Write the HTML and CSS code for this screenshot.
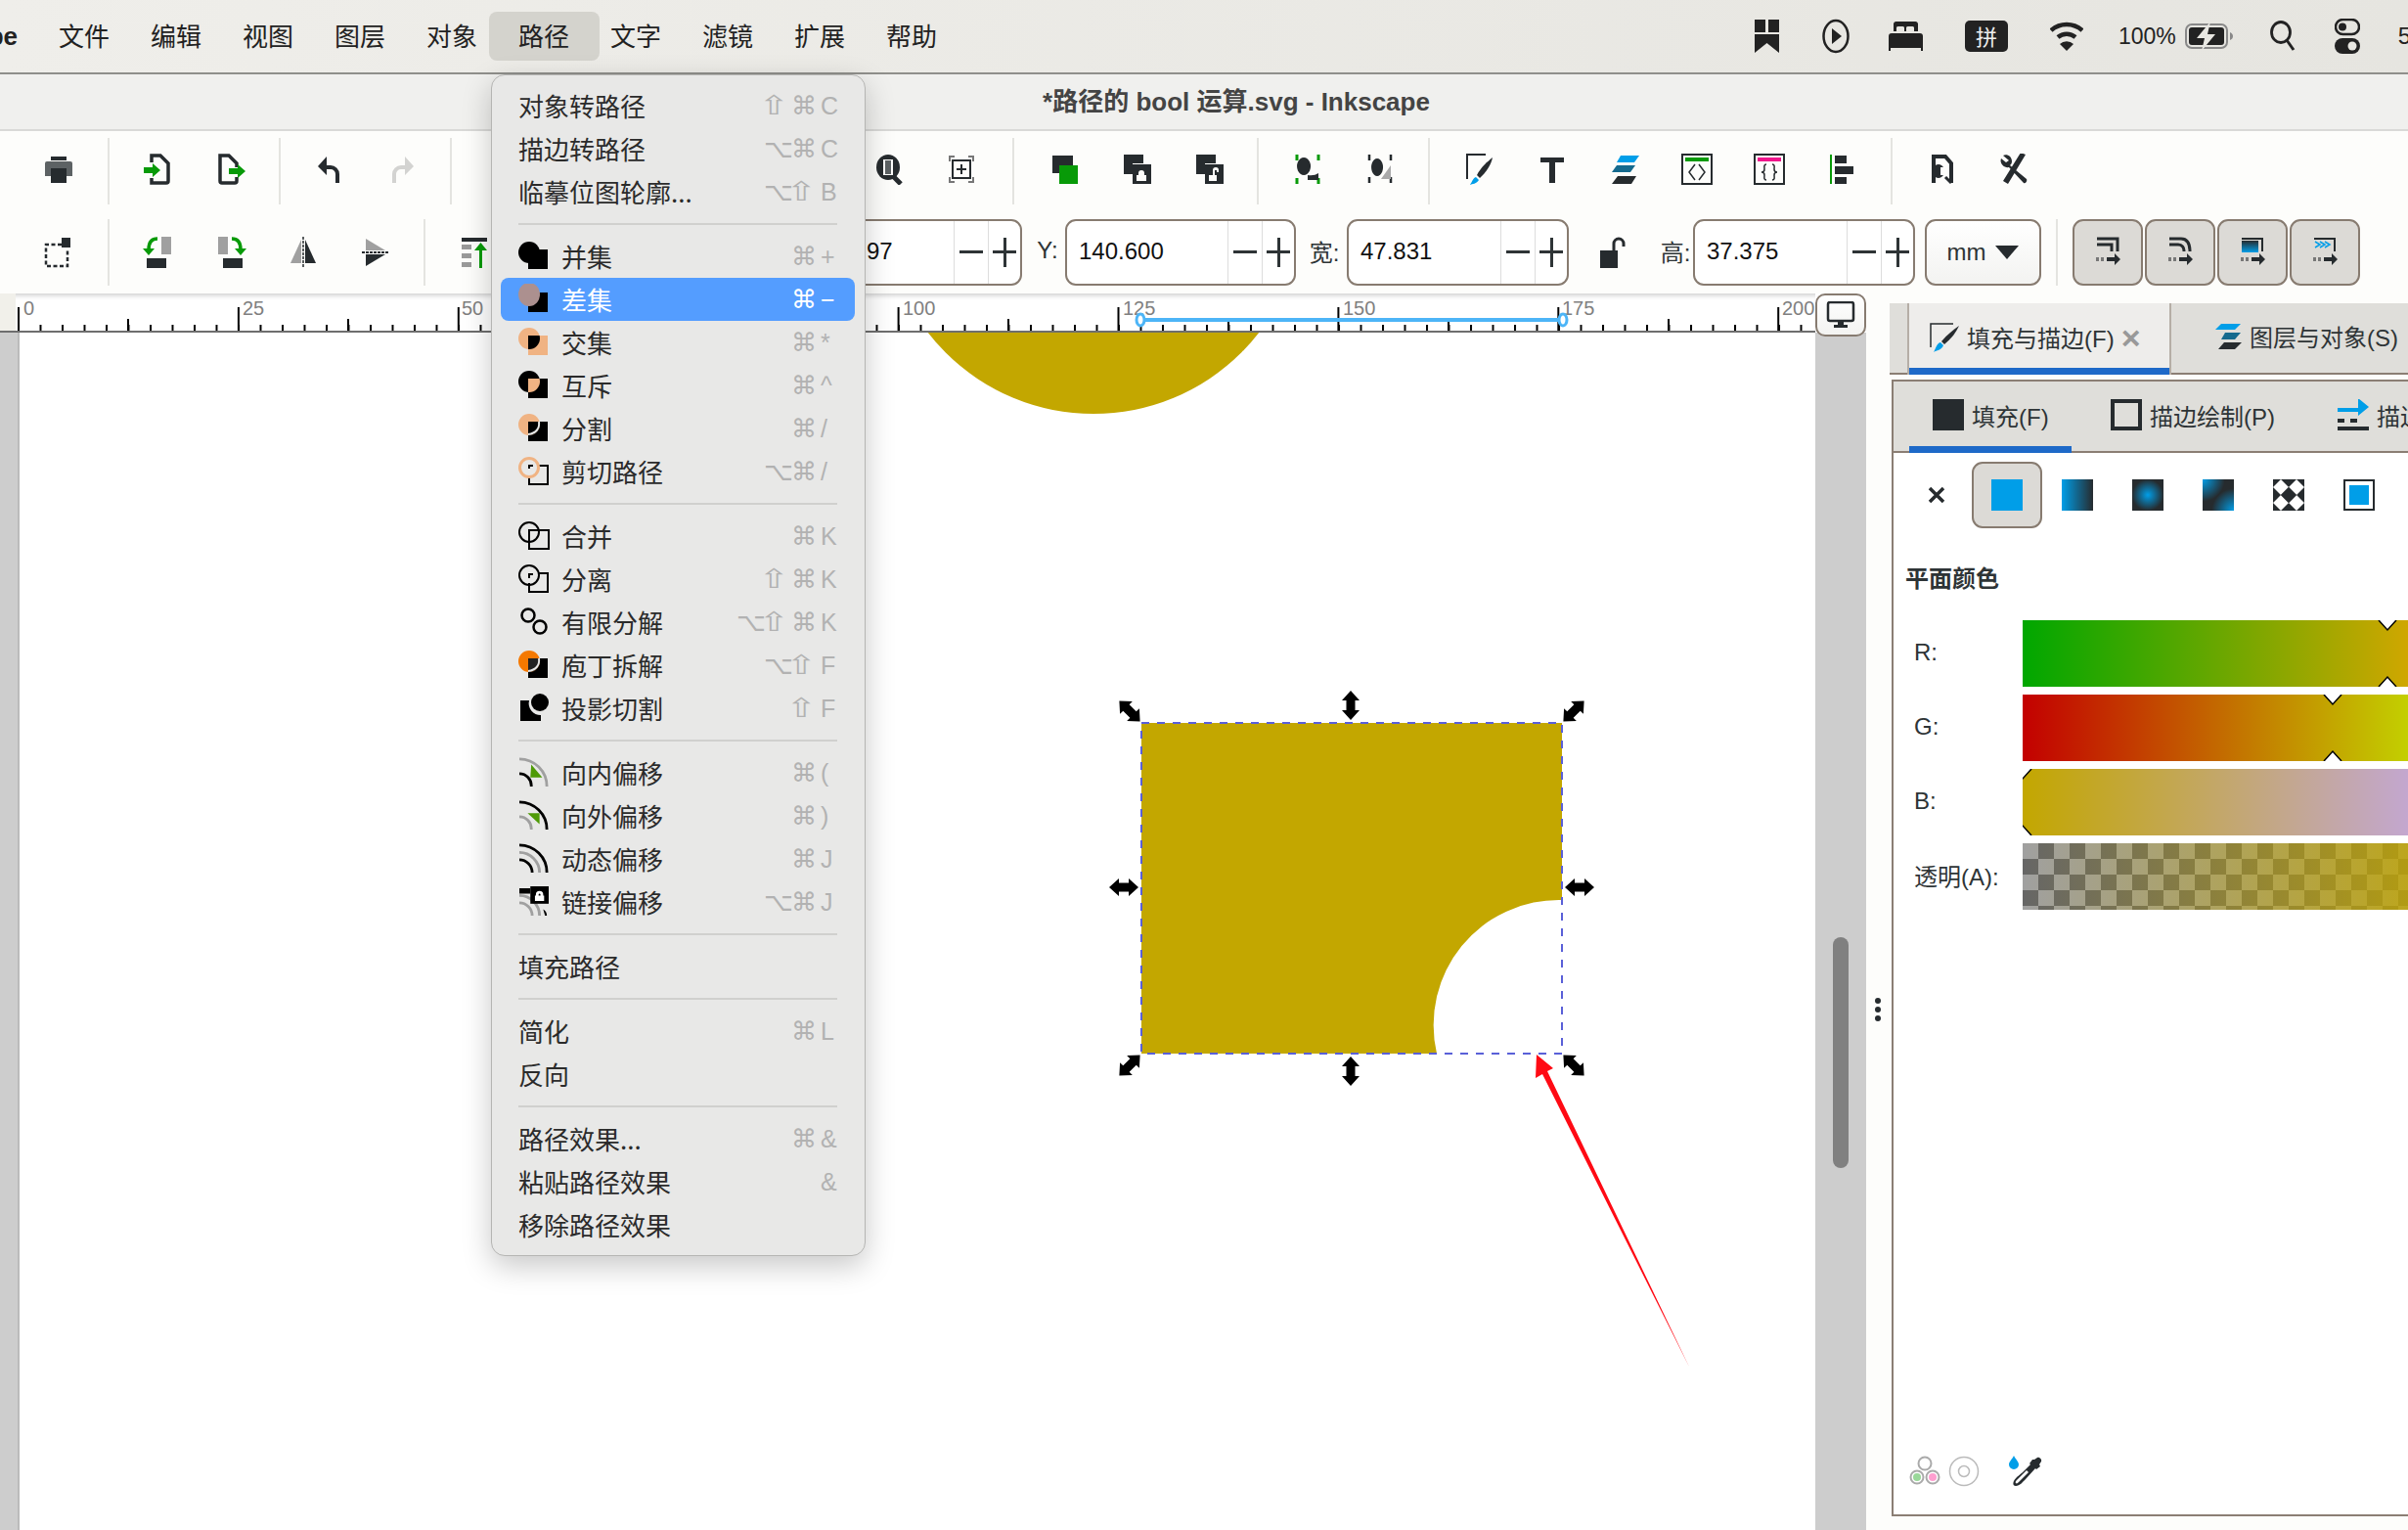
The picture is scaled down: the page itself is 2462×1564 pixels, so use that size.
FILE: index.html
```html
<!DOCTYPE html>
<html lang="zh-CN">
<head>
  <meta charset="UTF-8">
  <title>路径的 bool 运算.svg - Inkscape</title>
  <link rel="stylesheet" href="styles.css">
</head>
<body>
  <!-- shared clip shapes for the boolean icons -->
  <svg class="defs" width="0" height="0">
    <defs>
      <clipPath id="clip-square"><rect x="10" y="9" width="20" height="20"/></clipPath>
      <g id="handle"><path d="M0-15 9-5H4.5V5H9L0 15-9 5H-4.5V-5H-9Z"/></g>
      <pattern id="tick-minor" x="18" y="0" width="22.5" height="40" patternUnits="userSpaceOnUse"><rect y="32" width="2" height="6"/></pattern>
      <pattern id="tick-mid" x="130" y="0" width="225" height="40" patternUnits="userSpaceOnUse"><rect y="26" width="2" height="12"/></pattern>
      <pattern id="tick-major" x="18" y="0" width="224.9" height="40" patternUnits="userSpaceOnUse"><rect y="14" width="2" height="24"/></pattern>
    </defs>
  </svg>

  <!-- macOS menu bar -->
  <header class="menubar">
    <div class="app-name"><span>Inkscape</span></div>
    <nav class="menus">
      <a>文件</a><a>编辑</a><a>视图</a><a>图层</a><a>对象</a><a class="active">路径</a><a>文字</a><a>滤镜</a><a>扩展</a><a>帮助</a>
    </nav>
    <div class="status">
      <svg class="st-book" width="25" height="34" viewBox="0 0 25 34"><path d="M0 0h11v13H0zM14 0h11v13H14zM0 15h25v19L12.500 24 0 34z"/></svg>
      <svg class="st-play" width="28" height="36" viewBox="0 0 28 36"><ellipse cx="14" cy="18" rx="12.500" ry="16" fill="none" stroke="#222" stroke-width="2.500"/><path d="M10 10l10 8-10 8z"/></svg>
      <svg class="st-bed" width="35" height="30" viewBox="0 0 35 30"><path d="M5 2a3 3 0 0 1 3-2h19a3 3 0 0 1 3 2v8h-4V6a2 2 0 0 0-2-1h-4a2 2 0 0 0-2 1v4h-2V6a2 2 0 0 0-2-1H10a2 2 0 0 0-2 1v4H5zM3 12h29a3 3 0 0 1 3 3v15h-2v-3H2v3H0V15a3 3 0 0 1 3-3z"/></svg>
      <span class="st-pinyin">拼</span>
      <svg class="st-wifi" width="34" height="32" viewBox="0 0 34 32"><path d="M1 10a24 24 0 0 1 32 0" fill="none" stroke="#222" stroke-width="4.500"/><path d="M8 17a14 14 0 0 1 18 0" fill="none" stroke="#222" stroke-width="4.500"/><path d="M17 31l-7-7a10 10 0 0 1 14 0z"/></svg>
      <span class="st-batt-text">100%</span>
      <svg class="st-batt" width="50" height="32" viewBox="0 0 50 32"><rect x="1" y="4" width="42" height="24" rx="6" fill="none" stroke="#888" stroke-width="2"/><rect x="4" y="7" width="36" height="18" rx="3"/><path d="M46 12c2 1 3 2 3 4s-1 3-3 4z" fill="#888"/><path d="M26 1 12 18h8l-3 13 14-17h-8z" fill="#e8e7e2"/></svg>
      <svg class="st-search" width="26" height="32" viewBox="0 0 26 32"><ellipse cx="11" cy="12" rx="9.500" ry="10.500" fill="none" stroke="#222" stroke-width="2.800"/><path d="M17 20l7 10" stroke="#222" stroke-width="3"/></svg>
      <svg class="st-ctrl" width="26" height="36" viewBox="0 0 26 36"><rect x="1" y="1" width="24" height="15" rx="7.500" fill="none" stroke="#222" stroke-width="2.500"/><circle cx="8" cy="8.500" r="4"/><rect y="20" width="26" height="16" rx="8"/><circle cx="18" cy="28" r="4.500" fill="#e8e7e2"/></svg>
      <span class="st-clock">5</span>
    </div>
  </header>

  <div class="titlebar">*路径的 bool 运算.svg - Inkscape</div>

  <!-- Toolbars -->
  <section class="toolbars">
    <div class="toolrow row-one">
      <div class="group g-first">
        <div class="tool"><svg viewBox="0 0 32 32"><path class="dk" d="M8 3h16v4H8z"/><path fill="#5d6264" d="M2 10a2 2 0 0 1 2-2h24a2 2 0 0 1 2 2v13H2z"/><path class="dk" d="M8 15h16v15H8z"/></svg></div>
      </div>
      <div class="group g-file">
        <div class="tool"><svg viewBox="0 0 32 32"><path class="ln" d="M9 9V2h9l8 8v18a2 2 0 0 1-2 2H9v-5"/><path fill="#089a08" d="M1 14h9v-4l8 7-8 7v-4H1z"/></svg></div>
        <div class="tool"><svg viewBox="0 0 32 32"><path class="ln" d="M22 14v-4l-8-8H5v26a2 2 0 0 0 2 2h13a2 2 0 0 0 2-2v-4"/><path fill="#089a08" d="M14 15h9v-4l8 7-8 7v-4h-9z"/></svg></div>
      </div>
      <div class="group g-file">
        <div class="tool"><svg viewBox="0 0 32 32"><path class="dk" d="M13 3 4 13l9 9v-6h4a5 5 0 0 1 5 5v9h4v-9a9 9 0 0 0-9-9h-4z"/></svg></div>
        <div class="tool"><svg viewBox="0 0 32 32"><path fill="#d3d3d1" d="M19 3l9 10-9 9v-6h-4a5 5 0 0 0-5 5v9H6v-9a9 9 0 0 1 9-9h4z"/></svg></div>
      </div>
      <div class="group g-zoom">
        <div class="tool tool-hidden"><svg viewBox="0 0 32 32"><path class="dk" d="M0 0h6v22H0z"/></svg></div>
        <div class="tool"><svg viewBox="0 0 32 32"><ellipse cx="15" cy="14" rx="12" ry="13" class="dk"/><rect x="10" y="6" width="10" height="16" fill="#fdfdfb"/><rect x="12" y="7" width="6" height="14" fill="#5d6264"/><path d="M21 24l7 7" stroke="#262b2e" stroke-width="5"/></svg></div>
        <div class="tool"><svg viewBox="0 0 32 32"><path fill="none" stroke="#777" stroke-width="2" d="M4 8V3h5M23 3h5v5M28 24v5h-5M9 29H4v-5"/><rect x="7" y="7" width="18" height="18" fill="none" stroke="#262b2e" stroke-width="2"/><path d="M16 11v10M11 16h10" stroke="#262b2e" stroke-width="2"/></svg></div>
      </div>
      <div class="group g-order">
        <div class="tool"><svg viewBox="0 0 32 32"><path class="dk" d="M5 2h21v18H5z"/><path fill="#089a08" d="M15 12h19v19H15z" transform="translate(-3)"/></svg></div>
        <div class="tool"><svg viewBox="0 0 32 32"><path class="dk" d="M4 1h20v20H4z"/><path fill="#fdfdfb" d="M13 10h19v22H13z"/><path class="dk" d="M13 11h19v20H13z"/><path fill="#fdfdfb" d="M19 20a3 3 0 0 1 6 0v2h2v6H17v-6h2z"/></svg></div>
        <div class="tool"><svg viewBox="0 0 32 32"><path class="dk" d="M4 1h20v20H4z"/><path fill="#fdfdfb" d="M13 10h19v22H13z"/><path class="dk" d="M13 11h19v20H13z"/><path fill="#fdfdfb" d="M21 17a3 3 0 0 1 6 0v2h-2v-2h-2v5h2v6H17v-6h4z"/></svg></div>
      </div>
      <div class="group g-snap">
        <div class="tool"><svg viewBox="0 0 32 32"><path fill="none" stroke="#089a08" stroke-width="3" d="M5 1v6M27 1v6M5 25v6M27 25v6"/><path d="M12 4a7 9 0 1 0 .1 0z" class="dk"/><path class="dk" d="M16 22a10 5 0 0 0 11-2v7H16z"/></svg></div>
        <div class="tool"><svg viewBox="0 0 32 32"><path fill="none" stroke="#262b2e" stroke-width="2.500" stroke-dasharray="6 3" d="M5 1v9M27 1v9M5 24v7M27 24v7"/><path class="dk" d="M13 5a6 9 0 1 0 .1 0z"/><path fill="#a9a9a9" d="M27 12v14H17z"/></svg></div>
      </div>
      <div class="group g-docs">
        <div class="tool"><svg viewBox="0 0 32 32"><path fill="none" stroke="#262b2e" stroke-width="2" d="M22 1H3v25"/><path class="dk" d="M29 4c-1 6-6 15-13 21l-3-3C17 14 24 8 29 4z"/><path fill="#009ee8" d="M12 24l3 3c-2 4-7 4-9 5 2-3 3-7 6-8z"/></svg></div>
        <div class="tool"><svg viewBox="0 0 32 32"><path class="dk" d="M4 4h24v5H19v21h-6V9H4z"/></svg></div>
        <div class="tool"><svg viewBox="0 0 32 32"><path fill="#009ee8" d="M12 2h19l-5 7H8z"/><path fill="#156a8e" d="M8 12h19l-5 7H3z"/><path class="dk" d="M9 23h19l-5 8H3z"/></svg></div>
        <div class="tool"><svg viewBox="0 0 32 32"><rect x="1" y="1" width="30" height="30" fill="none" stroke="#262b2e" stroke-width="2"/><rect x="4" y="4" width="24" height="4" fill="#089a08"/><path d="M14 11l-6 8 6 8M18 11l6 8-6 8" fill="none" stroke="#262b2e" stroke-width="1.500"/></svg></div>
        <div class="tool"><svg viewBox="0 0 32 32"><rect x="1" y="1" width="30" height="30" fill="none" stroke="#262b2e" stroke-width="2"/><rect x="4" y="4" width="24" height="4" fill="#f0158c"/><path d="M13 11c-3 0-2 3-2 5s-1 3-3 3c2 0 3 1 3 3s-1 5 2 5M19 11c3 0 2 3 2 5s1 3 3 3c-2 0-3 1-3 3s1 5-2 5" fill="none" stroke="#262b2e" stroke-width="1.500"/></svg></div>
        <div class="tool"><svg viewBox="0 0 32 32"><path fill="#089a08" d="M4 1h2v30H4z"/><path class="dk" d="M9 2h12v8H9zM9 13h19v8H9zM9 24h12v7H9z"/></svg></div>
      </div>
      <div class="group g-prefs">
        <div class="tool"><svg viewBox="0 0 32 32"><path fill="none" stroke="#262b2e" stroke-width="4" d="M8 30V3h12l6 7v20"/><path class="dk" d="M13 11a6 7 0 1 1-.1 0z"/><rect x="15" y="14" width="5" height="8" fill="#fdfdfb"/><path d="M20 24l6 6" stroke="#262b2e" stroke-width="3"/></svg></div>
        <div class="tool"><svg viewBox="0 0 32 32"><path class="dk" d="M28 1 10 31l-5-3L23-1zM5 2c4-2 9 1 9 6 0 2-1 3-2 4l17 14c1 2-1 5-3 4L11 14c-5 1-10-4-8-9l5 4 3-2z"/></svg></div>
      </div>
    </div>

    <div class="toolrow row-two">
      <div class="group g-first">
        <div class="tool"><svg viewBox="0 0 32 32"><path fill="none" stroke="#262b2e" stroke-width="2.500" stroke-dasharray="4 2.500" d="M19 8H3v22h22V14"/><path class="dk" d="M19 1h9v10h-9z"/></svg></div>
      </div>
      <div class="group g-transform">
        <div class="tool"><svg viewBox="0 0 32 32"><path fill="#a0a0a0" d="M19 0h10v18H19z"/><path class="dk" d="M4 22h20v10H4z"/><path fill="none" stroke="#089a08" stroke-width="3.500" d="M15 2c-6 0-9 4-9 11"/><path fill="#089a08" d="M0 12h12l-6 7z"/></svg></div>
        <div class="tool"><svg viewBox="0 0 32 32"><path fill="#a0a0a0" d="M3 0h10v18H3z"/><path class="dk" d="M8 22h20v10H8z"/><path fill="none" stroke="#089a08" stroke-width="3.500" d="M17 2c6 0 9 4 9 11"/><path fill="#089a08" d="M20 12h12l-6 7z"/></svg></div>
        <div class="tool"><svg viewBox="0 0 32 32"><path fill="#a0a0a0" d="M14 3v24H3z"/><path class="dk" d="M18 3v24h11z"/><path d="M16 0v32" stroke="#262b2e" stroke-width="1.500" stroke-dasharray="3 1"/></svg></div>
        <div class="tool"><svg viewBox="0 0 32 32"><path fill="#a0a0a0" d="M6 2v12h20z"/><path class="dk" d="M6 30V18h20z"/><path d="M2 16h28" stroke="#262b2e" stroke-width="2" stroke-dasharray="3 1"/></svg></div>
      </div>
      <div class="group g-fields">
        <div class="tool tool-raise"><svg viewBox="0 0 32 32"><path class="dk" d="M3 1h26v4H3z"/><path fill="#9a9a9a" d="M3 8h10v5H3zM3 17h10v5H3zM3 26h10v5H3z"/><path fill="#089a08" d="M21 32V14h-5l6.500-8L29 14h-5v18z"/></svg></div>
        <div class="field field-x"><span class="value">97</span><span class="step minus"></span><span class="step plus"></span></div>
        <span class="field-label label-y">Y:</span>
        <div class="field field-y"><span class="value">140.600</span><span class="step minus"></span><span class="step plus"></span></div>
        <span class="field-label label-w">宽:</span>
        <div class="field field-w"><span class="value">47.831</span><span class="step minus"></span><span class="step plus"></span></div>
        <div class="lock"><svg width="28" height="32" viewBox="0 0 28 32"><path class="dk" d="M0 14h18v18H0z"/><path fill="none" stroke="#262b2e" stroke-width="3" d="M14 14V7a5 5 0 0 1 10 0v3"/></svg></div>
        <span class="field-label label-h">高:</span>
        <div class="field field-h"><span class="value">37.375</span><span class="step minus"></span><span class="step plus"></span></div>
        <div class="units">mm<svg width="24" height="14" viewBox="0 0 24 14"><path class="dk" d="M0 0h24L12 14z"/></svg></div>
        <div class="vsep"></div>
        <div class="toggle"><svg viewBox="0 0 32 32"><path fill="none" stroke="#262b2e" stroke-width="3" d="M5 2h21v13M5 8h15v7"/><path fill="#777" d="M4 21h3v4H4zM9 21h3v4H9z"/><path class="dk" d="M15 21h8v-4l6 6-6 6v-4h-8z"/></svg></div>
        <div class="toggle"><svg viewBox="0 0 32 32"><path fill="none" stroke="#262b2e" stroke-width="3" d="M5 2h12c6 0 9 5 9 13M5 8h9c4 0 6 3 6 7"/><path fill="#777" d="M4 21h3v4H4zM9 21h3v4H9z"/><path class="dk" d="M15 21h8v-4l6 6-6 6v-4h-8z"/></svg></div>
        <div class="toggle"><svg viewBox="0 0 32 32"><defs><linearGradient id="tg" x2="0" y2="1"><stop offset="0" stop-color="#262b2e"/><stop offset="1" stop-color="#009ee8"/></linearGradient></defs><path fill="none" stroke="#262b2e" stroke-width="2" d="M5 2h21v13"/><rect x="5" y="4" width="17" height="12" fill="url(#tg)"/><path fill="#777" d="M4 21h3v4H4zM9 21h3v4H9z"/><path class="dk" d="M15 21h8v-4l6 6-6 6v-4h-8z"/></svg></div>
        <div class="toggle"><svg viewBox="0 0 32 32"><path fill="none" stroke="#262b2e" stroke-width="2" d="M5 2h21v13"/><path fill="none" stroke="#009ee8" stroke-width="1.500" d="M6 5l5 3-5 3M11 5l5 3-5 3M16 5l5 3-5 3"/><path fill="#777" d="M4 21h3v4H4zM9 21h3v4H9z"/><path class="dk" d="M15 21h8v-4l6 6-6 6v-4h-8z"/></svg></div>
      </div>
    </div>
  </section>

  <div class="workspace">
    <!-- Canvas with ruler -->
    <main class="canvas-col">
      <div class="ruler-row">
        <svg class="ruler" width="1856" height="40" viewBox="0 0 1856 40">
          <rect width="16" height="38" fill="#f1f0ea"/>
          <g fill="#6e6e6e">
            <rect x="18" width="1838" height="40" fill="url(#tick-minor)"/>
            <rect x="130" width="1726" height="40" fill="url(#tick-mid)"/>
            <rect x="18" width="1838" height="40" fill="url(#tick-major)"/>
            <rect y="38" width="1856" height="2"/>
          </g>
          <g class="ruler-nums">
            <text x="24" y="22">0</text><text x="248" y="22">25</text><text x="472" y="22">50</text><text x="923" y="22">100</text>
            <text x="1148" y="22">125</text><text x="1373" y="22">150</text><text x="1597" y="22">175</text><text x="1822" y="22">200</text>
          </g>
          <rect x="1166" y="25" width="432" height="4" fill="#4db5f7"/>
          <ellipse cx="1166" cy="27" rx="4" ry="6" fill="#fff" stroke="#4db5f7" stroke-width="3"/>
          <ellipse cx="1598" cy="27" rx="4" ry="6" fill="#fff" stroke="#4db5f7" stroke-width="3"/>
        </svg>
        <div class="view-btn"><svg width="30" height="28" viewBox="0 0 30 28"><rect x="2" y="1" width="26" height="19" rx="2" fill="none" stroke="#262b2e" stroke-width="2.500"/><path class="dk" d="M12 21h6v3h4v3H8v-3h4z"/></svg></div>
      </div>
      <div class="canvas-row">
        <div class="vruler"></div>
        <div class="canvas">
          <svg width="1836" height="1224" viewBox="20 340 1836 1224">
            <circle cx="1118" cy="209" r="214" fill="#c3a700"/>
            <path d="M1167 739H1597V920A128 128 0 0 0 1469 1077H1167Z" fill="#c3a700"/>
            <rect x="1167" y="739" width="430" height="338" fill="none" stroke="#5a60d8" stroke-width="2" stroke-dasharray="8 8"/>
            <use href="#handle" transform="translate(1381 721)"/>
            <use href="#handle" transform="translate(1381 1095)"/>
            <use href="#handle" transform="translate(1149 907) rotate(90)"/>
            <use href="#handle" transform="translate(1615 907) rotate(90)"/>
            <use href="#handle" transform="translate(1155 727) rotate(-45)"/>
            <use href="#handle" transform="translate(1609 727) rotate(45)"/>
            <use href="#handle" transform="translate(1155 1089) rotate(45)"/>
            <use href="#handle" transform="translate(1609 1089) rotate(-45)"/>
            <polygon points="1571,1078 1588,1092 1582,1095 1727,1397 1577,1098 1570,1102" fill="#ff0a14"/>
          </svg>
        </div>
        <div class="scrollbar"><div class="thumb-v"></div></div>
      </div>
    </main>

    <div class="divider"><i></i><i></i><i></i></div>

    <!-- Fill and stroke dock -->
    <aside class="dock">
      <div class="dock-tabs">
        <div class="dock-stub"></div>
        <div class="dock-tab on">
          <svg width="32" height="32" viewBox="0 0 32 32"><path fill="none" stroke="#262b2e" stroke-width="1.500" d="M24 2H1v24"/><path class="dk" d="M30 4C27 11 22 17 15 23l-3-3C18 13 24 8 30 4z"/><path fill="#009ee8" d="M11 21l3 3c-2 5-7 5-10 7 2-3 3-9 7-10z"/></svg>
          <span>填充与描边(F)</span><b class="tab-x">×</b>
        </div>
        <div class="dock-tab">
          <svg width="32" height="32" viewBox="0 0 32 32"><path fill="#009ee8" d="M9 3h20l-6 6H3z"/><path fill="#156a8e" d="M9 12h16l-6 7H5z" transform="translate(4)"/><path class="dk" d="M14 22h18l-7 7H8z" transform="translate(-2)"/></svg>
          <span>图层与对象(S)</span>
        </div>
      </div>

      <div class="dock-box">
        <div class="sub-tabs">
          <div class="sub-tab on"><span class="swatch-solid"></span><span>填充(F)</span></div>
          <div class="sub-tab"><span class="swatch-open"></span><span>描边绘制(P)</span></div>
          <div class="sub-tab"><svg width="32" height="32" viewBox="0 0 32 32"><path fill="#009ee8" d="M0 10h21V0l11 9-11 9v-4H0z" transform="translate(0 -1)"/><path class="dk" d="M0 20h7v4H0zM13 20h7v4h-7zM0 28h32v4H0z"/></svg><span>描边样式(Y)</span></div>
        </div>

        <div class="paint-row">
          <div class="paint-none"><svg width="18" height="18" viewBox="0 0 18 18"><path d="M2 2l14 14M16 2 2 16" stroke="#262b2e" stroke-width="3.500"/></svg></div>
          <div class="paint on"><span class="pi pi-flat"></span></div>
          <div class="paint"><span class="pi pi-linear"></span></div>
          <div class="paint"><span class="pi pi-radial"></span></div>
          <div class="paint"><span class="pi pi-mesh"></span></div>
          <div class="paint"><svg width="32" height="32" viewBox="0 0 32 32"><rect width="32" height="32" fill="#262b2e"/><path fill="#fff" d="M8 0l8 8-8 8-8-8zM24 0l8 8-8 8-8-8zM8 16l8 8-8 8-8-8zM24 16l8 8-8 8-8-8z"/><path fill="#262b2e" d="M16 8l8 8-8 8-8-8z"/></svg></div>
          <div class="paint"><span class="pi pi-swatch"><span></span></span></div>
        </div>

        <h3 class="flat-title">平面颜色</h3>

        <div class="color-row">
          <label>R:</label>
          <div class="slider s-red">
            <svg class="pin top" style="left:373px" width="20" height="12" viewBox="0 0 20 12"><path d="M1 0 10 10 19 0" fill="#fff" stroke="#000" stroke-width="1.500"/></svg>
            <svg class="pin bot" style="left:373px" width="20" height="12" viewBox="0 0 20 12"><path d="M1 12 10 2 19 12" fill="#fff" stroke="#000" stroke-width="1.500"/></svg>
          </div>
        </div>
        <div class="color-row">
          <label>G:</label>
          <div class="slider s-green">
            <svg class="pin top" style="left:317px" width="20" height="12" viewBox="0 0 20 12"><path d="M1 0 10 10 19 0" fill="#fff" stroke="#000" stroke-width="1.500"/></svg>
            <svg class="pin bot" style="left:317px" width="20" height="12" viewBox="0 0 20 12"><path d="M1 12 10 2 19 12" fill="#fff" stroke="#000" stroke-width="1.500"/></svg>
          </div>
        </div>
        <div class="color-row">
          <label>B:</label>
          <div class="slider s-blue">
            <svg class="pin top" style="left:0" width="20" height="12" viewBox="0 0 20 12"><path d="M1 0 10 10 19 0" fill="#fff" stroke="#000" stroke-width="1.500"/></svg>
            <svg class="pin bot" style="left:0" width="20" height="12" viewBox="0 0 20 12"><path d="M1 12 10 2 19 12" fill="#fff" stroke="#000" stroke-width="1.500"/></svg>
          </div>
        </div>
        <div class="color-row">
          <label>透明(A):</label>
          <div class="slider s-alpha"></div>
        </div>

        <div class="dock-foot">
          <svg width="34" height="32" viewBox="0 0 34 32"><g fill="#fff" stroke="#aaa" stroke-width="2"><circle cx="17" cy="8" r="6.500"/><circle cx="9" cy="22" r="6.500"/><circle cx="25" cy="22" r="6.500"/></g><circle cx="9" cy="22" r="4" fill="#9ad89a"/><circle cx="25" cy="22" r="4" fill="#ff9fd0"/></svg>
          <svg class="foot-ring" width="32" height="32" viewBox="0 0 32 32"><circle cx="16" cy="16" r="14.500" fill="none" stroke="#bbb" stroke-width="1.500"/><circle cx="16" cy="16" r="5.500" fill="none" stroke="#bbb" stroke-width="1.500"/></svg>
          <svg class="foot-drop" width="34" height="32" viewBox="0 0 34 32"><path fill="#009ee8" d="M5 0c2 4 5 6 5 9a5 5 0 0 1-10 0c0-3 3-5 5-9z"/><path class="dk" d="M26 4l3-2c2-1 5 2 4 4l-2 3 1 2-4 3-1-1L17 24c-3 3-6 7-10 7-3 0-3-3-2-5 2-4 7-7 10-10l7-7-1-1 3-4z"/><path fill="#fff" d="M18 15l2 2-9 9c-2 2-3 3-4 2s0-2 2-4z"/></svg>
        </div>
      </div>
    </aside>
  </div>

  <!-- Open 路径 menu -->
  <div class="popup">
    <div class="row"><span>对象转路径</span><span class="keys"><i class="shift">⇧</i><i>⌘</i><b>C</b></span></div>
    <div class="row"><span>描边转路径</span><span class="keys"><i>⌥</i><i>⌘</i><b>C</b></span></div>
    <div class="row"><span>临摹位图轮廓...</span><span class="keys"><i>⌥</i><i class="shift">⇧</i><b>B</b></span></div>
    <hr>
    <div class="row">
      <svg class="mi" viewBox="0 0 32 30"><circle cx="11" cy="12" r="11"/><rect x="10" y="9" width="20" height="20"/></svg>
      <span>并集</span><span class="keys"><i>⌘</i><b>+</b></span>
    </div>
    <div class="row hot">
      <svg class="mi" viewBox="0 0 32 30"><rect x="10" y="9" width="20" height="20"/><ellipse cx="11" cy="11" rx="11" ry="12" fill="#ac908f"/></svg>
      <span>差集</span><span class="keys"><i>⌘</i><b>−</b></span>
    </div>
    <div class="row">
      <svg class="mi" viewBox="0 0 32 30"><rect x="10" y="9" width="20" height="20" fill="#f0b383"/><circle cx="11" cy="12" r="11" fill="#f0b383"/><circle cx="11" cy="12" r="11" clip-path="url(#clip-square)"/></svg>
      <span>交集</span><span class="keys"><i>⌘</i><b>*</b></span>
    </div>
    <div class="row">
      <svg class="mi" viewBox="0 0 32 30"><rect x="10" y="9" width="20" height="20"/><circle cx="11" cy="12" r="11"/><circle cx="11" cy="12" r="11" fill="#f0b383" clip-path="url(#clip-square)"/></svg>
      <span>互斥</span><span class="keys"><i>⌘</i><b>^</b></span>
    </div>
    <div class="row">
      <svg class="mi" viewBox="0 0 32 30"><rect x="10" y="9" width="20" height="20"/><circle cx="11" cy="12" r="11" fill="#f0b383"/><circle cx="11" cy="12" r="11" clip-path="url(#clip-square)"/><path d="M21 9c1 7-3 12-11 13" fill="none" stroke="#e8e8e7" stroke-width="2"/></svg>
      <span>分割</span><span class="keys"><i>⌘</i><b>/</b></span>
    </div>
    <div class="row">
      <svg class="mi" viewBox="0 0 32 30"><path d="M21 10h9v19H11v-9" fill="none" stroke="#000" stroke-width="2"/><path d="M11 13v-3h4" fill="none" stroke="#000" stroke-width="2"/><circle cx="11" cy="12" r="9.500" fill="none" stroke="#f0b383" stroke-width="3"/></svg>
      <span>剪切路径</span><span class="keys"><i>⌥</i><i>⌘</i><b>/</b></span>
    </div>
    <hr>
    <div class="row">
      <svg class="mi" viewBox="0 0 32 30"><rect x="11" y="10" width="20" height="19" fill="none" stroke="#000" stroke-width="2"/><circle cx="11" cy="12" r="10" fill="none" stroke="#000" stroke-width="2"/></svg>
      <span>合并</span><span class="keys"><i>⌘</i><b>K</b></span>
    </div>
    <div class="row">
      <svg class="mi" viewBox="0 0 32 30"><path d="M21 10h9v19H11v-9" fill="none" stroke="#000" stroke-width="2"/><path d="M11 15v-4h4" fill="none" stroke="#000" stroke-width="2"/><circle cx="11" cy="12" r="10" fill="none" stroke="#000" stroke-width="2"/></svg>
      <span>分离</span><span class="keys"><i class="shift">⇧</i><i>⌘</i><b>K</b></span>
    </div>
    <div class="row">
      <svg class="mi" viewBox="0 0 32 30"><circle cx="10" cy="9" r="6.500" fill="none" stroke="#000" stroke-width="2.500"/><circle cx="22" cy="21" r="6.500" fill="none" stroke="#000" stroke-width="2.500"/></svg>
      <span>有限分解</span><span class="keys"><i>⌥</i><i class="shift">⇧</i><i>⌘</i><b>K</b></span>
    </div>
    <div class="row">
      <svg class="mi" viewBox="0 0 32 30"><rect x="10" y="9" width="20" height="20"/><circle cx="11" cy="12" r="11" fill="#f57900"/><circle cx="11" cy="12" r="11" fill="#222" clip-path="url(#clip-square)"/><path d="M21 9c1 7-3 12-11 13" fill="none" stroke="#e8e8e7" stroke-width="2"/></svg>
      <span>庖丁拆解</span><span class="keys"><i>⌥</i><i class="shift">⇧</i><b>F</b></span>
    </div>
    <div class="row">
      <svg class="mi" viewBox="0 0 32 30"><path d="M2 8H11A12 12 0 0 0 23 23V29H2Z"/><circle cx="22" cy="10" r="9"/></svg>
      <span>投影切割</span><span class="keys"><i class="shift">⇧</i><b>F</b></span>
    </div>
    <hr>
    <div class="row">
      <svg class="mi" viewBox="0 0 32 32"><path d="M0 2a30 30 0 0 1 30 30" fill="none" stroke="#a0a0a0" stroke-width="3"/><path d="M0 18a13 13 0 0 1 13 14" fill="none" stroke="#000" stroke-width="3"/><path d="M13 8l12 14H12z" fill="#4e9a06"/></svg>
      <span>向内偏移</span><span class="keys"><i>⌘</i><b>(</b></span>
    </div>
    <div class="row">
      <svg class="mi" viewBox="0 0 32 32"><path d="M0 2a30 30 0 0 1 30 30" fill="none" stroke="#000" stroke-width="3"/><path d="M0 18a13 13 0 0 1 13 14" fill="none" stroke="#a0a0a0" stroke-width="3"/><path d="M9 14h13v12z" fill="#4e9a06"/></svg>
      <span>向外偏移</span><span class="keys"><i>⌘</i><b>)</b></span>
    </div>
    <div class="row">
      <svg class="mi" viewBox="0 0 32 32"><path d="M0 2a30 30 0 0 1 30 30" fill="none" stroke="#000" stroke-width="3"/><path d="M0 10a22 22 0 0 1 22 22" fill="none" stroke="#a0a0a0" stroke-width="3"/><path d="M0 18a14 14 0 0 1 14 14" fill="none" stroke="#000" stroke-width="3"/></svg>
      <span>动态偏移</span><span class="keys"><i>⌘</i><b>J</b></span>
    </div>
    <div class="row">
      <svg class="mi" viewBox="0 0 32 32"><path d="M0 10a22 22 0 0 1 22 22" fill="none" stroke="#a0a0a0" stroke-width="3"/><path d="M0 18a14 14 0 0 1 14 14" fill="none" stroke="#a0a0a0" stroke-width="3"/><path d="M0 2h12v6H0zM26 25a8 8 0 0 1 4 7h-2z"/><rect x="12" y="0" width="20" height="19"/><path d="M18 9a4 4 0 0 1 8 0v1h1v6H17v-6h1z" fill="#fff"/><path d="M21 9a1 1 0 0 1 2 0v1h-2z"/></svg>
      <span>链接偏移</span><span class="keys"><i>⌥</i><i>⌘</i><b>J</b></span>
    </div>
    <hr>
    <div class="row"><span>填充路径</span></div>
    <hr>
    <div class="row"><span>简化</span><span class="keys"><i>⌘</i><b>L</b></span></div>
    <div class="row"><span>反向</span></div>
    <hr>
    <div class="row"><span>路径效果...</span><span class="keys"><i>⌘</i><b>&amp;</b></span></div>
    <div class="row"><span>粘贴路径效果</span><span class="keys"><b>&amp;</b></span></div>
    <div class="row"><span>移除路径效果</span></div>
  </div>
</body>
</html>
```

FILE: styles.css
```css
/* Global */
html, body {
  margin: 0;
  height: 1564px;
  overflow: hidden;
}
body {
  position: relative;
  background: #fdfdfb;
  color: #2e3436;
  font-family: "Liberation Sans", "Noto Sans CJK SC", sans-serif;
  font-size: 24px;
}
svg { display: block; flex: none; }
.defs { position: absolute; }
.dk { fill: #262b2e; }
.ln { fill: none; stroke: #262b2e; stroke-width: 3.5; }

/* Menu bar */
.menubar {
  display: flex;
  align-items: center;
  height: 74px;
  background: linear-gradient(90deg, #efeeea, #e6e5e0);
  border-bottom: 2px solid #8f8f8b;
  color: #222;
  font-size: 26px;
  font-family: "Noto Sans CJK SC", sans-serif;
  overflow: hidden;
}
.app-name {
  display: flex;
  flex: none;
  justify-content: flex-end;
  width: 18px;
  margin-right: 21px;
  overflow: hidden;
  font-family: "Liberation Sans", sans-serif;
  font-weight: bold;
  white-space: nowrap;
}
.menus { display: flex; flex: none; }
.menus a {
  width: 94px;
  height: 50px;
  line-height: 47px;
  text-align: center;
}
.menus a.active {
  position: relative;
  width: 113px;
  margin: 0 -9.5px;
  background: #d4d3cd;
  border-radius: 8px;
}
.status {
  display: flex;
  flex: none;
  align-items: center;
  margin-left: 815px;
  white-space: nowrap;
}
.status svg { fill: #222; }
.st-play { margin-left: 44px; }
.st-bed { margin-left: 40px; }
.st-pinyin {
  width: 44px;
  height: 32px;
  margin-left: 43px;
  background: #222;
  border-radius: 5px;
  color: #eee;
  font-size: 22px;
  line-height: 30px;
  text-align: center;
}
.st-wifi { margin-left: 43px; }
.st-batt-text { margin-left: 36px; font-family: "Liberation Sans", sans-serif; font-size: 23px; }
.st-batt { margin-left: 9px; }
.st-search { margin-left: 37px; }
.st-ctrl { margin-left: 40px; }
.st-clock { margin-left: 39px; font-family: "Liberation Sans", sans-serif; font-size: 24px; }

.titlebar {
  height: 56px;
  padding-left: 66px;
  background: #f0f0ee;
  border-bottom: 2px solid #d9d9d7;
  color: #444;
  font-weight: bold;
  font-size: 26px;
  line-height: 56px;
  text-align: center;
}

/* Toolbars */
.toolbars { height: 166px; }
.toolrow {
  display: flex;
  align-items: center;
}
.row-one { height: 81px; }
.row-one .tool svg { margin-top: -4px; }
.row-two { height: 85px; }
.group {
  display: flex;
  flex: none;
  justify-content: center;
  align-items: center;
  box-sizing: border-box;
  height: 68px;
  border-right: 2px solid #e4e4e0;
}
.tool {
  display: flex;
  flex: none;
  justify-content: center;
  align-items: center;
  width: 74px;
  height: 68px;
}
.tool svg { width: 32px; height: 32px; }
.tool-hidden { margin-right: 291px; }
.g-first { width: 112px; justify-content: flex-start; padding-left: 23px; }
.g-file { width: 175px; }
.g-zoom { width: 575px; justify-content: flex-end; padding-right: 15px; }
.g-order { width: 250px; }
.g-snap { width: 175px; }
.g-docs { width: 473px; }
.g-prefs { width: 200px; border: 0; justify-content: flex-start; padding-left: 13px; }
.g-transform { width: 323px; }
.g-fields {
  flex: 1;
  justify-content: flex-start;
  border: 0;
}
.tool-raise { margin-left: 13px; }

.field {
  display: flex;
  flex: none;
  box-sizing: border-box;
  height: 68px;
  background: #fff;
  border: 2px solid #877b70;
  border-radius: 11px;
  color: #111;
  line-height: 61px;
}
.value { flex: 1; padding-left: 12px; }
.step {
  width: 34px;
  border-left: 1px solid #ddd;
  background-repeat: no-repeat;
  background-position: center;
}
.minus {
  background-image: linear-gradient(#2e3436, #2e3436);
  background-size: 24px 3px;
}
.plus {
  width: 32px;
  background-image: linear-gradient(#2e3436, #2e3436), linear-gradient(#2e3436, #2e3436);
  background-size: 24px 3px, 3px 30px;
}
.field-x { width: 235px; margin-left: 288px; }
.field-x .value { padding-left: 74px; }
.field-y { width: 236px; }
.field-w { width: 227px; }
.field-h { width: 227px; }
.field-label { flex: none; box-sizing: border-box; text-align: center; padding-bottom: 3px; }
.label-y { width: 44px; padding-left: 8px; }
.label-w { width: 52px; padding-left: 6px; }
.label-h { width: 36px; }
.lock { flex: none; width: 91px; display: flex; justify-content: center; }
.units {
  display: flex;
  flex: none;
  align-items: center;
  justify-content: center;
  gap: 10px;
  box-sizing: border-box;
  width: 119px;
  height: 68px;
  margin-left: 10px;
  background: linear-gradient(#fff, #f3f3f1);
  border: 2px solid #877b70;
  border-radius: 11px;
}
.vsep { flex: none; width: 2px; height: 68px; margin: 0 15px; background: #e4e4e0; }
.toggle {
  display: flex;
  flex: none;
  align-items: center;
  justify-content: center;
  box-sizing: border-box;
  width: 72px;
  height: 68px;
  margin-right: 2px;
  background: #dcdad6;
  border: 2px solid #877b70;
  border-radius: 11px;
}
.toggle svg { width: 32px; height: 32px; }

/* Workspace */
.workspace {
  display: flex;
  height: 1264px;
}
.canvas-col {
  flex: none;
  width: 1908px;
}
.ruler-row {
  display: flex;
  height: 40px;
  background: #fff;
}
.ruler { box-shadow: inset 0 6px 5px -4px rgba(0, 0, 0, 0.2); }
.ruler-nums text {
  fill: #808080;
  font-family: "Liberation Sans", sans-serif;
  font-size: 20px;
}
.view-btn {
  display: flex;
  flex: none;
  align-items: center;
  justify-content: center;
  position: relative;
  box-sizing: border-box;
  width: 52px;
  height: 44px;
  background: linear-gradient(#fff, #f3f3f1);
  border: 2px solid #877b70;
  border-radius: 10px;
}
.canvas-row {
  display: flex;
  height: 1224px;
}
.vruler {
  box-sizing: border-box;
  width: 20px;
  background: #cdcdcd;
  border-right: 2px solid #bbb;
}
.canvas {
  width: 1836px;
  background: #fff;
}
.scrollbar {
  width: 52px;
  background: #cdcdcd;
}
.thumb-v {
  width: 16px;
  height: 236px;
  margin: 618px 0 0 18px;
  background: #808080;
  border-radius: 8px;
}
.divider {
  display: flex;
  flex: none;
  flex-direction: column;
  align-items: center;
  gap: 3px;
  width: 24px;
  padding-top: 720px;
  box-sizing: border-box;
}
.divider i {
  width: 6px;
  height: 6px;
  background: #262b2e;
  border-radius: 50%;
}

/* Dock */
.dock {
  flex: none;
  width: 530px;
  padding-top: 10px;
  box-sizing: border-box;
  overflow: hidden;
}
.dock-tabs {
  display: flex;
  height: 71px;
  width: 560px;
  background: #dfdeda;
  border-bottom: 2px solid #8b7e74;
}
.dock-stub { flex: none; width: 18px; }
.dock-tab {
  display: flex;
  flex: none;
  align-items: center;
  gap: 6px;
  box-sizing: border-box;
  width: 270px;
  padding: 0 0 4px 21px;
  white-space: nowrap;
  border-right: 2px solid #b5aea6;
}
.dock-tab:last-child { padding-left: 42px; border: 0; }
.dock-tab.on {
  background: #eeedeb;
  border-left: 2px solid #b5aea6;
  box-shadow: inset 0 -7px 0 #1e69c8;
  margin-bottom: -2px;
}
.tab-x {
  margin-left: 1px;
  color: #999;
  font-size: 34px;
  line-height: 1;
}
.dock-box {
  display: flex;
  flex-direction: column;
  box-sizing: border-box;
  width: 560px;
  height: 1162px;
  margin: 5px 0 0 2px;
  background: #fff;
  border: 2px solid #8b7e74;
}
.sub-tabs {
  display: flex;
  flex: none;
  height: 71px;
  padding-left: 16px;
  background: #dfdeda;
  border-bottom: 2px solid #8b7e74;
  white-space: nowrap;
}
.sub-tab {
  display: flex;
  flex: none;
  align-items: center;
  gap: 8px;
  box-sizing: border-box;
  height: 73px;
  padding: 0 0 5px 24px;
  width: 166px;
}
.sub-tab:nth-child(2) { width: 272px; padding-left: 40px; }
.sub-tab:nth-child(3) { width: 200px; padding-left: 0; }
.sub-tab.on { box-shadow: inset 0 -7px 0 #1e69c8; }
.swatch-solid { flex: none; width: 32px; height: 32px; background: #262b2e; }
.swatch-open { flex: none; box-sizing: border-box; width: 32px; height: 32px; border: 4px solid #262b2e; }

.paint-row {
  display: flex;
  flex: none;
  height: 68px;
  margin-top: 9px;
}
.paint-none {
  display: flex;
  flex: none;
  align-items: center;
  justify-content: center;
  width: 80px;
  padding-left: 8px;
  box-sizing: border-box;
}
.paint {
  display: flex;
  flex: none;
  align-items: center;
  justify-content: center;
  box-sizing: border-box;
  width: 72px;
  height: 68px;
  border: 2px solid transparent;
  border-radius: 11px;
}
.paint.on { background: #dcdad6; border-color: #877b70; }
.pi { display: block; width: 32px; height: 32px; }
.pi-flat { background: #009ee8; }
.pi-linear { background: linear-gradient(90deg, #009ee8, #262b2e); }
.pi-radial { background: radial-gradient(circle closest-side, #009ee8, #262b2e); }
.pi-mesh {
  background:
    radial-gradient(circle at 0 0, #009ee8, transparent 50%),
    radial-gradient(circle at 100% 100%, #009ee8, transparent 50%),
    #262b2e;
}
.pi-swatch {
  display: flex;
  align-items: center;
  justify-content: center;
  box-sizing: border-box;
  background: #fff;
  border: 2px solid #262b2e;
}
.pi-swatch span { width: 20px; height: 20px; background: #009ee8; }

.flat-title {
  flex: none;
  margin: 37px 0 25px 12px;
  font-size: 24px;
  line-height: 30px;
  height: 32px;
  font-weight: bold;
}
.color-row {
  display: flex;
  align-items: center;
  flex: none;
  height: 68px;
  margin-bottom: 8px;
}
.color-row label {
  flex: none;
  width: 111px;
  margin-left: 21px;
  padding-bottom: 3px;
  white-space: nowrap;
}
.slider {
  flex: none;
  position: relative;
  width: 485px;
  height: 68px;
  overflow: hidden;
}
.s-red { background: linear-gradient(90deg, rgb(0, 167, 0), rgb(255, 167, 0)); }
.s-green { background: linear-gradient(90deg, rgb(195, 0, 0), rgb(195, 255, 0)); }
.s-blue { background: linear-gradient(90deg, rgb(195, 167, 0), rgb(195, 167, 255)); }
.s-alpha {
  background:
    linear-gradient(90deg, rgba(195, 167, 0, 0), rgb(195, 167, 0)),
    repeating-conic-gradient(#666 0 25%, #a0a0a0 0 50%) 0 0 / 32px 32px;
}
.pin { position: absolute; margin-left: -10px; }
.pin.top { top: 0; }
.pin.bot { bottom: 0; }

.dock-foot {
  display: flex;
  align-items: center;
  margin: auto 0 28px 15px;
  flex: none;
}
.foot-ring { margin-left: 7px; }
.foot-drop { margin-left: 30px; }

/* Popup menu */
.popup {
  position: absolute;
  left: 502px;
  top: 76px;
  box-sizing: border-box;
  width: 383px;
  height: 1208px;
  padding: 9px 10px 0 9px;
  background: #e8e8e7;
  border: 1px solid #b5b5b3;
  border-radius: 14px;
  box-shadow: 0 10px 30px rgba(0, 0, 0, 0.22);
  color: #2b2b2b;
  font-family: "Noto Sans CJK SC", sans-serif;
  font-size: 26px;
}
.popup hr {
  height: 2px;
  margin: 10px 18px;
  background: #d0d0ce;
  border: 0;
}
.row {
  display: flex;
  align-items: center;
  box-sizing: border-box;
  height: 44px;
  padding: 0 18px 2px;
  white-space: nowrap;
}
.mi { flex: none; width: 32px; height: 30px; margin-right: 12px; fill: #000; }
.keys {
  display: flex;
  align-items: center;
  margin: 2px 0 0 auto;
  color: #b2b2b2;
  font-family: "Liberation Sans", "DejaVu Sans", sans-serif;
  font-size: 25px;
}
.keys i {
  width: 28px;
  font-family: "DejaVu Sans", sans-serif;
  font-size: 26px;
  font-style: normal;
  text-align: left;
  transform: translateX(-2px);
}
.keys i.shift {
  text-align: center;
  padding-right: 6px;
  box-sizing: border-box;
  transform: translateX(-1px) scale(1.45, 1.05);
}
.keys b {
  width: 17px;
  font-weight: normal;
}
.row.hot {
  background: #549dff;
  border-radius: 8px;
  color: #fff;
}
.row.hot .keys { color: #fff; }
```
